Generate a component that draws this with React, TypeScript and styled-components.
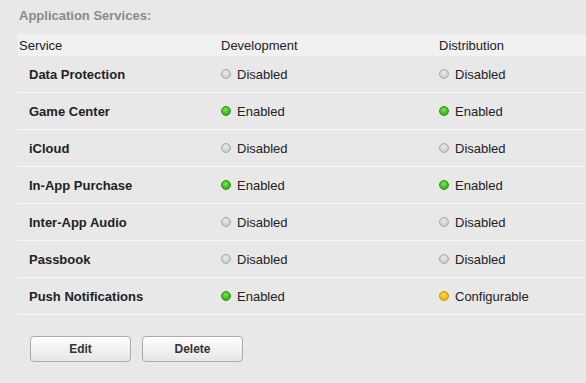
import React from 'react'
import styled, { createGlobalStyle } from 'styled-components'

type Status = 'Enabled' | 'Disabled' | 'Configurable'

interface ServiceRow {
  name: string
  dev: Status
  dist: Status
}

const services: ServiceRow[] = [
  { name: 'Data Protection', dev: 'Disabled', dist: 'Disabled' },
  { name: 'Game Center', dev: 'Enabled', dist: 'Enabled' },
  { name: 'iCloud', dev: 'Disabled', dist: 'Disabled' },
  { name: 'In-App Purchase', dev: 'Enabled', dist: 'Enabled' },
  { name: 'Inter-App Audio', dev: 'Disabled', dist: 'Disabled' },
  { name: 'Passbook', dev: 'Disabled', dist: 'Disabled' },
  { name: 'Push Notifications', dev: 'Enabled', dist: 'Configurable' },
]

const GlobalStyle = createGlobalStyle`
  body {
    margin: 0;
    background: #e8e8e8;
    font-family: "Lucida Grande", "Liberation Sans", Arial, sans-serif;
    color: #222;
  }
`

const Page = styled.div`
  padding: 8px 2px 0 18px;
  width: 586px;
  height: 383px;
  box-sizing: border-box;
`

const Title = styled.h2`
  margin: 0 0 0 1px;
  font-size: 13px;
  font-weight: bold;
  color: #8a8a8a;
  line-height: 16px;
`

const Table = styled.div`
  margin-top: 10px;
`

const HeaderRow = styled.div`
  display: grid;
  grid-template-columns: 202px 218px 1fr;
  height: 22px;
  align-items: center;
  background: #f1f1f1;
  padding-left: 1px;
  margin-right: -2px;
  font-size: 13px;
  color: #222;
`

const Row = styled.div`
  display: grid;
  grid-template-columns: 202px 218px 1fr;
  height: 36px;
  align-items: center;
  padding-left: 1px;
  border-bottom: 1px solid #f8f8f8;
  font-size: 13px;
`

const Name = styled.div`
  padding-left: 10px;
  font-weight: bold;
  color: #222;
`

const StatusCell = styled.div`
  display: flex;
  align-items: center;
  gap: 6px;
  color: #222;
`

const dotColors: Record<Status, { hi: string; mid: string; edge: string }> = {
  Enabled: { hi: '#7fe35a', mid: '#3cb81c', edge: '#2a9010' },
  Disabled: { hi: '#ececec', mid: '#cfcfcf', edge: '#a8a8a8' },
  Configurable: { hi: '#ffe066', mid: '#f2b600', edge: '#c48f00' },
}

const Dot = styled.span<{ $status: Status }>`
  width: 10px;
  height: 10px;
  border-radius: 50%;
  box-sizing: border-box;
  border: 1px solid ${(p) => dotColors[p.$status].edge};
  background: radial-gradient(
    circle at 45% 35%,
    ${(p) => dotColors[p.$status].hi} 0%,
    ${(p) => dotColors[p.$status].mid} 60%
  );
`

const Actions = styled.div`
  display: flex;
  gap: 11px;
  margin: 21px 0 0 12px;
`

const Button = styled.button`
  width: 101px;
  height: 26px;
  border: 1px solid #a9a9a9;
  border-radius: 4px;
  background: linear-gradient(#fdfdfd, #e6e6e6);
  box-shadow: inset 0 1px 0 #ffffff;
  font-family: "Lucida Grande", "Liberation Sans", Arial, sans-serif;
  font-size: 12px;
  font-weight: bold;
  color: #333;
  cursor: pointer;
`

const StatusLabel = ({ status }: { status: Status }) => (
  <StatusCell>
    <Dot $status={status} />
    {status}
  </StatusCell>
)

export default function App() {
  return (
    <Page>
      <GlobalStyle />
      <Title>Application Services:</Title>
      <Table>
        <HeaderRow>
          <div>Service</div>
          <div>Development</div>
          <div>Distribution</div>
        </HeaderRow>
        {services.map((s) => (
          <Row key={s.name}>
            <Name>{s.name}</Name>
            <StatusLabel status={s.dev} />
            <StatusLabel status={s.dist} />
          </Row>
        ))}
      </Table>
      <Actions>
        <Button>Edit</Button>
        <Button>Delete</Button>
      </Actions>
    </Page>
  )
}
